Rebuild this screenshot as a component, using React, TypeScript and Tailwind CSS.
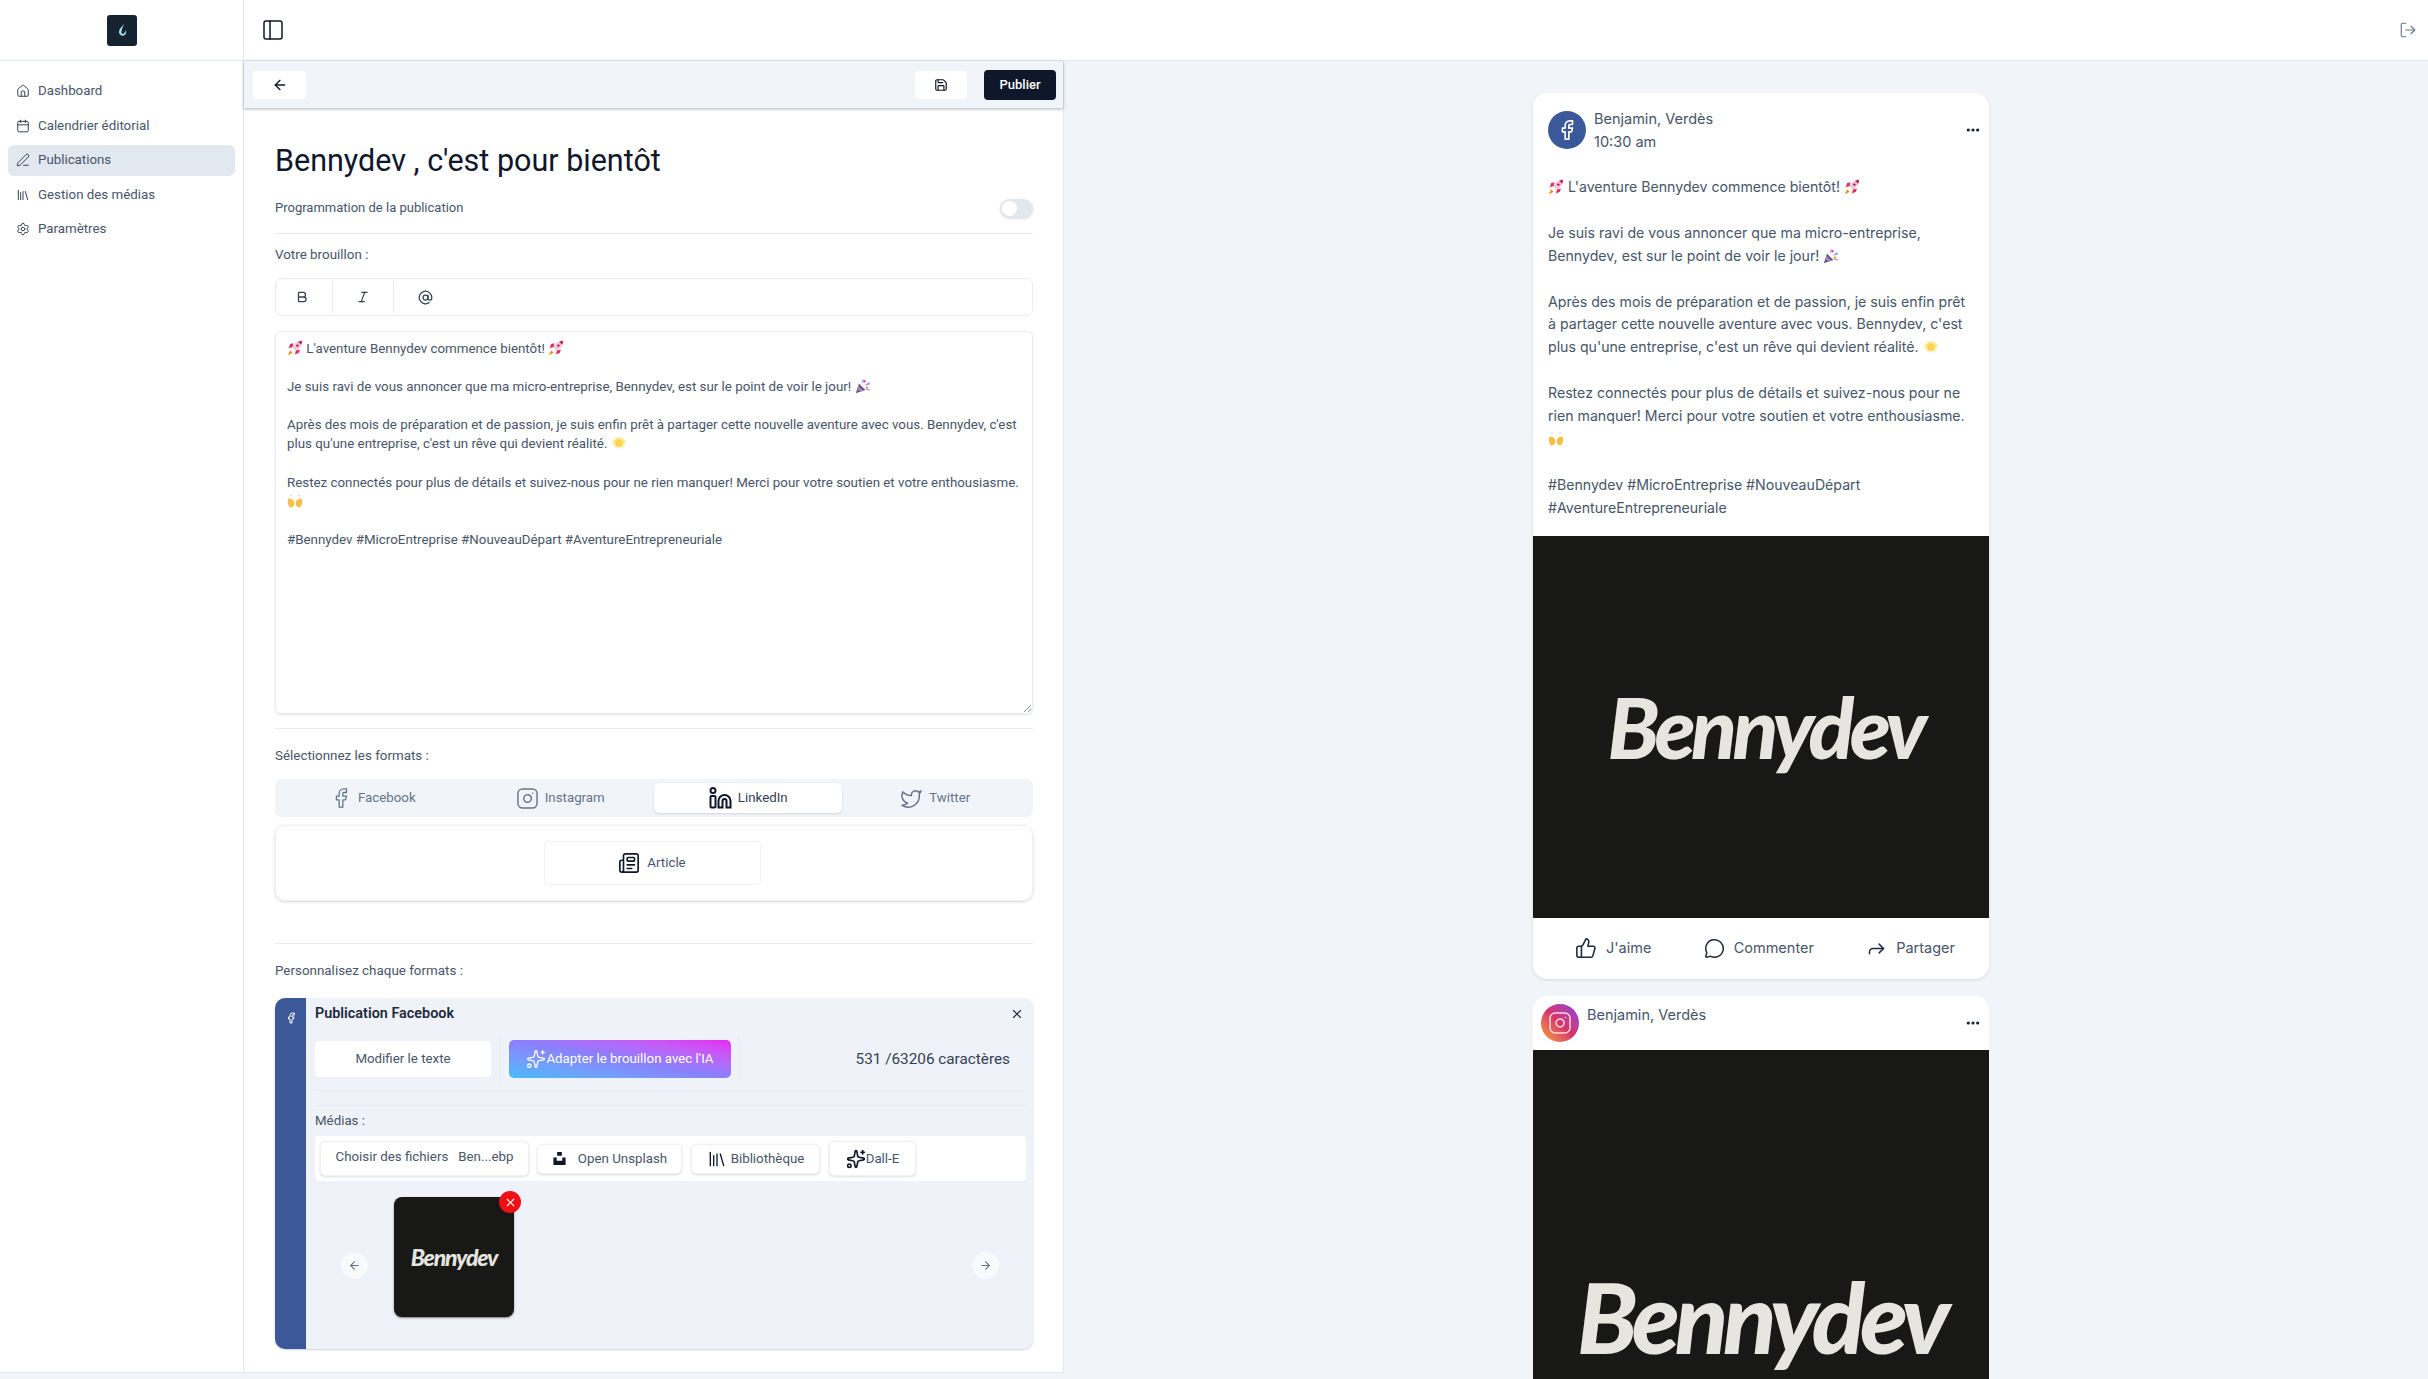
import {
  ArrowLeft,
  ArrowRight,
  AtSign,
  Bold,
  Calendar,
  Ellipsis,
  Facebook,
  Forward,
  House,
  Instagram,
  Italic,
  Library,
  LogOut,
  MessageCircle,
  Newspaper,
  PanelLeft,
  PenLine,
  Save,
  Settings,
  Sparkles,
  ThumbsUp,
  Twitter,
  X,
} from "lucide-react";
import type { ReactNode } from "react";

const Rocket = () => (
  <svg viewBox="0 0 20 20" className="inline-block w-[16px] h-[16px] align-[-3px]">
    <path d="M19 1c-6 .3-10 3-12 8l4 4c5-2 7.700-6 8-12z" fill="#f3c6d4" />
    <path d="M19 1c-2 .1-3.600.6-5 1.400L17.600 6C18.400 4.600 18.900 3 19 1z" fill="#c2255c" />
    <path d="M7 9L2 10l2-5 4-1zM11 13l-1 5 5-2 1-4z" fill="#d6336c" />
    <path d="M4 13l3 3-6 3z" fill="#f08c00" />
    <circle cx="13" cy="7" r="1.500" fill="#a61e4d" />
  </svg>
);

const Party = () => (
  <svg viewBox="0 0 20 20" className="inline-block w-[16px] h-[16px] align-[-3px]">
    <path d="M1 19l4-12 8 8z" fill="#6b5b7b" />
    <path d="M4 10l6 6-3 1-4-3z" fill="#a78bc0" />
    <circle cx="12" cy="4" r="1.500" fill="#ec4899" />
    <circle cx="17" cy="7" r="1.500" fill="#60a5fa" />
    <circle cx="15" cy="12" r="1.500" fill="#f59e0b" />
    <path d="M9 6l2-4M13 9l5-2M14 14l5 1" stroke="#a78bfa" strokeWidth="1.400" />
  </svg>
);

const Sun = () => (
  <svg viewBox="0 0 20 20" className="inline-block w-[16px] h-[16px] align-[-3px]">
    <path
      d="M10 1l1.500 3.500L14.500 2.500l.2 3.800 3.800.2-2 3 2 3-3.800.2-.2 3.800-3-2-1.500 3.500-1.500-3.500-3 2-.2-3.800-3.800-.2 2-3-2-3 3.800-.2.2-3.800 3 2z"
      fill="#fde68a"
    />
    <circle cx="10" cy="10" r="4.500" fill="#fcd34d" />
  </svg>
);

const Hands = () => (
  <svg viewBox="0 0 20 20" className="inline-block w-[16px] h-[16px] align-[-3px]">
    <path d="M1 10c0-2 1-3 2.500-3S8 8 9 11s-1 7-4 7-4-5-4-8z" fill="#f5c04a" />
    <path d="M19 10c0-2-1-3-2.500-3S12 8 11 11s1 7 4 7 4-5 4-8z" fill="#f5c04a" />
    <path d="M4 2v2M6 2v2M14 2v2M16 2v2" stroke="#cbd5e1" strokeWidth="1" />
  </svg>
);

const LinkedinOutline = () => (
  <svg viewBox="0 0 24 24" className="w-[24px] h-[24px] text-[#0f172a]" fill="none" stroke="currentColor" strokeWidth="2">
    <circle cx="5" cy="4.500" r="2.500" />
    <rect x="2.500" y="10" width="5" height="11.500" rx="1" />
    <path d="M10.500 21.500V15a6 6 0 0 1 12 0v6.500h-4V15a2 2 0 0 0-4 0v6.500z" />
  </svg>
);

const navItems = [
  { label: "Dashboard", icon: House },
  { label: "Calendrier éditorial", icon: Calendar },
  { label: "Publications", icon: PenLine, active: true },
  { label: "Gestion des médias", icon: Library },
  { label: "Paramètres", icon: Settings },
];

const Sidebar = () => (
  <aside className="w-[244px] h-[1373px] shrink-0 bg-white border-r border-b border-[#e2e8f0]">
    <div className="h-[61px] flex items-center justify-center border-b border-[#e2e8f0] pl-[1px]">
      <div className="w-[30px] h-[31px] rounded-[3px] bg-[#14232f] flex items-center justify-center">
        <svg viewBox="0 0 16 16" className="w-[15px] h-[15px]">
          <path d="M10 1C6 4.500 3.500 8 4.500 11c1 3 5.500 3.500 7 .5 .6-1.400 .5-2.800 0-4-.2 2-1.200 3.600-2.800 4C7 12 6.500 10.500 7 8.500 7.400 6 8.500 3.500 10 1z" fill="#a5e6e6" />
        </svg>
      </div>
    </div>
    <nav className="px-[8px] pt-[15px] flex flex-col gap-[4px]">
      {navItems.map((item) => (
        <div
          key={item.label}
          className={`h-[30.500px] px-[8px] flex items-center gap-[8px] rounded-[6px] text-[13.300px] text-[#475569] ${
            item.active ? "bg-[#e2e8f0]" : ""
          }`}
        >
          <item.icon className="w-[14px] h-[14px] text-[#334155]" strokeWidth={1.700} />
          <span>{item.label}</span>
        </div>
      ))}
    </nav>
  </aside>
);

const Divider = ({ className = "" }: { className?: string }) => (
  <div className={`h-px bg-[#e7ecf2] ${className}`} />
);

const FieldLabel = ({ children, className = "" }: { children: ReactNode; className?: string }) => (
  <p className={`h-[18px] leading-[18px] text-[13.400px] text-[#475569] ${className}`}>{children}</p>
);

const Tab = ({ children, active }: { children: ReactNode; active?: boolean }) => (
  <div
    className={`flex items-center justify-center gap-[6px] rounded-[5px] text-[13.300px] ${
      active ? "bg-white text-[#334155] shadow-sm" : "text-[#64748b]"
    }`}
  >
    {children}
  </div>
);

const MediaButton = ({ children, className = "" }: { children: ReactNode; className?: string }) => (
  <div
    className={`flex items-center justify-center rounded-[5px] bg-white border border-[#edf0f5] shadow-sm text-[13.300px] text-[#475569] ${className}`}
  >
    {children}
  </div>
);

const UnsplashIcon = () => (
  <svg viewBox="0 0 16 16" className="w-[15px] h-[15px]" fill="#0f172a">
    <path d="M5.500 1h5v4h-5zM1.500 7H5v3.500h6V7h3.500v8h-13z" />
  </svg>
);

const Editor = () => (
  <section className="w-[820px] h-[1312px] shrink-0 bg-white border-r border-b border-[#e2e8f0]">
    <div className="h-[47px] bg-[#f1f5f9] shadow-[0_1px_3px_rgba(15,23,42,0.35)] flex items-center pl-[9px] pr-[7px]">
      <div className="w-[53px] h-[28px] bg-white rounded-[4px] flex items-center justify-center">
        <ArrowLeft className="w-[16px] h-[16px] text-[#0f172a]" />
      </div>
      <div className="ml-auto w-[52px] h-[28px] bg-white rounded-[4px] flex items-center justify-center">
        <Save className="w-[14px] h-[14px] text-[#0f172a]" />
      </div>
      <div className="ml-[17px] w-[72px] h-[30px] bg-[#0f172a] rounded-[4px] flex items-center justify-center text-[13px] font-medium text-white">
        Publier
      </div>
    </div>

    <div className="pl-[31px] pr-[30px]">
      <h1 className="mt-[33px] h-[40px] leading-[40px] text-[30.500px] text-[#0f172a]">Bennydev , c'est pour bientôt</h1>

      <div className="mt-[17px] h-[20px] flex items-center justify-between">
        <span className="text-[13px] text-[#475569]">Programmation de la publication</span>
        <div className="w-[33px] h-[19px] rounded-full bg-[#e2e8f0] shadow-sm p-[2px]">
          <div className="w-[15px] h-[15px] rounded-full bg-white" />
        </div>
      </div>
      <Divider className="mt-[15px]" />

      <FieldLabel className="mt-[12px]">Votre brouillon :</FieldLabel>

      <div className="mt-[14px] h-[38px] flex items-center rounded-[6px] border border-[#e9edf3] text-[#334155]">
        <div className="w-[57px] h-[32px] flex items-center justify-center border-r border-[#e9edf3] pr-[5px]">
          <Bold className="w-[14px] h-[14px]" strokeWidth={2.200} />
        </div>
        <div className="w-[61px] h-[32px] flex items-center justify-center border-r border-[#e9edf3]">
          <Italic className="w-[14px] h-[14px]" />
        </div>
        <div className="w-[61px] h-[32px] flex items-center justify-center pl-[1px]">
          <AtSign className="w-[15px] h-[15px]" />
        </div>
      </div>

      <div className="mt-[15px] h-[383px] relative rounded-[6px] border border-[#e9edf3] shadow-[0_1px_2px_rgba(15,23,42,0.12)] px-[11px] pt-[7px] text-[13.330px] leading-[19.100px] text-[#475569]">
        <p>
          <Rocket /> L'aventure Bennydev commence bientôt! <Rocket />
        </p>
        <p className="mt-[19.100px]">
          Je suis ravi de vous annoncer que ma micro-entreprise, Bennydev, est sur le point de voir le jour! <Party />
        </p>
        <p className="mt-[19.100px]">
          Après des mois de préparation et de passion, je suis enfin prêt à partager cette nouvelle aventure avec vous.
          Bennydev, c'est plus qu'une entreprise, c'est un rêve qui devient réalité. <Sun />
        </p>
        <p className="mt-[19.100px]">
          Restez connectés pour plus de détails et suivez-nous pour ne rien manquer! Merci pour votre soutien et votre
          enthousiasme. <Hands />
        </p>
        <p className="mt-[19.100px]">#Bennydev #MicroEntreprise #NouveauDépart #AventureEntrepreneuriale</p>
        <svg viewBox="0 0 8 8" className="absolute right-[1px] bottom-[1px] w-[8px] h-[8px]" stroke="#64748b" strokeWidth="0.800">
          <path d="M1 8l7-7M5 8l3-3" />
        </svg>
      </div>
      <Divider className="mt-[14px]" />

      <FieldLabel className="mt-[18px]">Sélectionnez les formats :</FieldLabel>

      <div className="mt-[14px] h-[38px] rounded-[6px] bg-[#f1f5f9] p-[4px] grid grid-cols-4">
        <Tab>
          <Facebook className="w-[22px] h-[24px]" strokeWidth={1.400} />
          Facebook
        </Tab>
        <Tab>
          <Instagram className="w-[23px] h-[23px]" strokeWidth={1.500} />
          Instagram
        </Tab>
        <Tab active>
          <LinkedinOutline />
          LinkedIn
        </Tab>
        <Tab>
          <Twitter className="w-[23px] h-[23px]" strokeWidth={1.500} />
          Twitter
        </Tab>
      </div>

      <div className="mt-[8px] h-[76px] rounded-[10px] border border-[#eef1f5] shadow-[0_1px_3px_rgba(15,23,42,0.18)] flex items-center justify-center pr-[4px]">
        <div className="w-[217px] h-[44px] rounded-[4px] border border-[#eef1f5] flex items-center justify-center gap-[7px] text-[13.300px] text-[#475569]">
          <Newspaper className="w-[22px] h-[22px] text-[#0f172a]" strokeWidth={1.800} />
          Article
        </div>
      </div>
      <Divider className="mt-[42px]" />

      <FieldLabel className="mt-[18px]">Personnalisez chaque formats :</FieldLabel>

      <div className="mt-[18px] h-[351px] flex rounded-[10px] overflow-hidden bg-[#eff3f9] shadow-[0_1px_2px_rgba(15,23,42,0.2)]">
        <div className="w-[31px] shrink-0 bg-[#3b5998] flex justify-center pt-[12px]">
          <Facebook className="w-[12px] h-[16px] text-white" />
        </div>
        <div className="flex-1 pl-[9px] pr-[7px] pt-[6px]">
          <div className="h-[20px] flex items-center justify-between pr-[2px]">
            <span className="text-[14.400px] leading-[20px] font-semibold text-[#1e293b]">Publication Facebook</span>
            <X className="w-[14px] h-[14px] text-[#1e293b]" />
          </div>

          <div className="mt-[16px] h-[38px] flex items-center">
            <div className="w-[176px] h-[36px] rounded-[4px] bg-white flex items-center justify-center text-[13.300px] text-[#475569]">
              Modifier le texte
            </div>
            <div className="ml-[9px] w-px h-[46px] bg-[#e7ecf2]" />
            <div className="ml-[8px] w-[222px] h-[38px] rounded-[5px] bg-linear-to-tr from-[#3fbcfb] via-[#8a7ffc] to-[#e81ef2] flex items-center justify-center text-[13.300px] text-white">
              <Sparkles className="w-[20px] h-[20px]" strokeWidth={1.600} />
              Adapter le brouillon avec l'IA
            </div>
            <div className="ml-[7px] w-px h-[46px] bg-[#e7ecf2]" />
            <span className="ml-auto pr-[16px] text-[15.300px] text-[#334155]">531 /63206 caractères</span>
          </div>

          <Divider className="mt-[12px]" />
          <Divider className="mt-[14px]" />
          <p className="mt-[6px] h-[18px] leading-[18px] text-[13.300px] text-[#475569]">Médias :</p>

          <div className="mt-[6px] h-[45px] rounded-[4px] bg-white flex items-center pl-[5px]">
            <MediaButton className="w-[209px] h-[35px] gap-[10px] pb-[4px]">
              <span>Choisir des fichiers</span>
              <span>Ben...ebp</span>
            </MediaButton>
            <MediaButton className="ml-[8px] w-[145px] h-[30px] gap-[11px]">
              <UnsplashIcon />
              Open Unsplash
            </MediaButton>
            <MediaButton className="ml-[9px] w-[129px] h-[30px] gap-[4px]">
              <Library className="w-[20px] h-[20px] text-[#0f172a]" strokeWidth={1.600} />
              Bibliothèque
            </MediaButton>
            <MediaButton className="ml-[9px] w-[87px] h-[35px]">
              <Sparkles className="w-[20px] h-[20px] text-[#0f172a]" strokeWidth={2} />
              Dall-E
            </MediaButton>
          </div>

          <div className="mt-[16px] h-[120px] flex items-center relative">
            <div className="ml-[26px] w-[27px] h-[27px] mt-[16px] rounded-full bg-[#f8fafc] flex items-center justify-center">
              <ArrowLeft className="w-[13px] h-[13px] text-[#64748b]" />
            </div>
            <div className="ml-[26px] w-[120px] h-[120px] relative rounded-[8px] bg-[#181817] shadow-[0_1px_2px_rgba(0,0,0,0.5)] flex items-center justify-center">
              <span className="font-['Lato',sans-serif] italic font-black text-[23px] tracking-[-1.200px] text-[#e6e5e0]">
                Bennydev
              </span>
              <div className="absolute -top-[6px] -right-[7px] w-[22px] h-[22px] rounded-full bg-[#f00f14] flex items-center justify-center">
                <X className="w-[13px] h-[13px] text-white" />
              </div>
            </div>
            <div className="ml-auto mr-[27px] mt-[16px] w-[27px] h-[27px] rounded-full bg-[#f8fafc] flex items-center justify-center">
              <ArrowRight className="w-[13px] h-[13px] text-[#64748b]" />
            </div>
          </div>
        </div>
      </div>
    </div>
  </section>
);

const PostAction = ({ icon, label }: { icon: ReactNode; label: string }) => (
  <div className="flex items-center gap-[9px] text-[14.500px] text-[#475569]">
    {icon}
    <span>{label}</span>
  </div>
);

const Preview = () => (
  <section className="flex-1 min-w-0 h-[1318px] overflow-hidden pl-[469px] pt-[32px] font-['Inter',sans-serif] text-[#475569]">
    <article className="w-[456px] rounded-[14px] overflow-hidden bg-white shadow-[0_1px_3px_rgba(15,23,42,0.12)]">
      <header className="h-[58px] mt-[8px] flex items-center pl-[15px] pr-[8px] text-[14.500px]">
        <div className="w-[38px] h-[38px] rounded-full bg-[#3b5998] flex items-center justify-center">
          <Facebook className="w-[22px] h-[22px] text-white" strokeWidth={1.800} />
        </div>
        <div className="ml-[8px] leading-[23px]">
          <p>Benjamin, Verdès</p>
          <p>10:30 am</p>
        </div>
        <Ellipsis className="ml-auto w-[16px] h-[16px] text-[#0f172a]" strokeWidth={2.800} />
      </header>
      <div className="px-[15px] pt-[17px] pb-[16px] text-[14.150px] leading-[22.900px]">
        <p>
          <Rocket /> L'aventure Bennydev commence bientôt! <Rocket />
        </p>
        <p className="mt-[22.900px]">
          Je suis ravi de vous annoncer que ma micro-entreprise, Bennydev, est sur le point de voir le jour! <Party />
        </p>
        <p className="mt-[22.900px]">
          Après des mois de préparation et de passion, je suis enfin prêt à partager cette nouvelle aventure avec vous.
          Bennydev, c'est plus qu'une entreprise, c'est un rêve qui devient réalité. <Sun />
        </p>
        <p className="mt-[22.900px]">
          Restez connectés pour plus de détails et suivez-nous pour ne rien manquer! Merci pour votre soutien et votre
          enthousiasme. <Hands />
        </p>
        <p className="mt-[22.900px]">#Bennydev #MicroEntreprise #NouveauDépart #AventureEntrepreneuriale</p>
      </div>
      <div className="h-[382px] bg-[#181817] flex items-center justify-center">
        <span className="font-['Lato',sans-serif] italic font-black text-[84px] leading-none tracking-[-4.500px] text-[#e6e5e0] pl-[8px]">
          Bennydev
        </span>
      </div>
      <div className="h-[61px] flex items-center justify-between pl-[42px] pr-[34px]">
        <PostAction icon={<ThumbsUp className="w-[22px] h-[22px] text-[#1e293b]" strokeWidth={1.700} />} label="J'aime" />
        <PostAction icon={<MessageCircle className="w-[21px] h-[21px] text-[#1e293b]" strokeWidth={1.700} />} label="Commenter" />
        <PostAction icon={<Forward className="w-[21px] h-[21px] text-[#1e293b] " strokeWidth={1.700} />} label="Partager" />
      </div>
    </article>

    <article className="mt-[17px] w-[456px] rounded-t-[14px] overflow-hidden bg-white">
      <header className="h-[54px] flex pl-[8px] pr-[8px] text-[14.500px]">
        <div className="mt-[8px] w-[38px] h-[38px] rounded-full bg-linear-to-tr from-[#f59e0b] via-[#d6336c] to-[#8e2de2] flex items-center justify-center">
          <Instagram className="w-[24px] h-[24px] text-[#fbd5d5]" strokeWidth={1.500} />
        </div>
        <p className="ml-[8px] mt-[7px] leading-[23px]">Benjamin, Verdès</p>
        <Ellipsis className="ml-auto mt-[19px] w-[16px] h-[16px] text-[#0f172a]" strokeWidth={2.800} />
      </header>
      <div className="h-[533px] bg-[#181817] flex items-center justify-center">
        <span className="font-['Lato',sans-serif] italic font-black text-[98px] leading-none tracking-[-5.200px] text-[#e6e5e0]">
          Bennydev
        </span>
      </div>
    </article>
  </section>
);

export default function App() {
  return (
    <div className="flex h-[1379px] overflow-hidden bg-[#f1f5f9] font-['Roboto',sans-serif]">
      <Sidebar />
      <main className="flex-1 min-w-0 flex flex-col">
        <div className="h-[61px] shrink-0 bg-white border-b border-[#e2e8f0] flex items-center pl-[17px] pr-[11px] justify-between">
          <PanelLeft className="w-[24px] h-[24px] text-[#0f172a]" strokeWidth={1.500} />
          <LogOut className="w-[18px] h-[18px] text-[#64748b]" strokeWidth={1.500} />
        </div>
        <div className="flex flex-1 min-h-0">
          <Editor />
          <Preview />
        </div>
      </main>
    </div>
  );
}
